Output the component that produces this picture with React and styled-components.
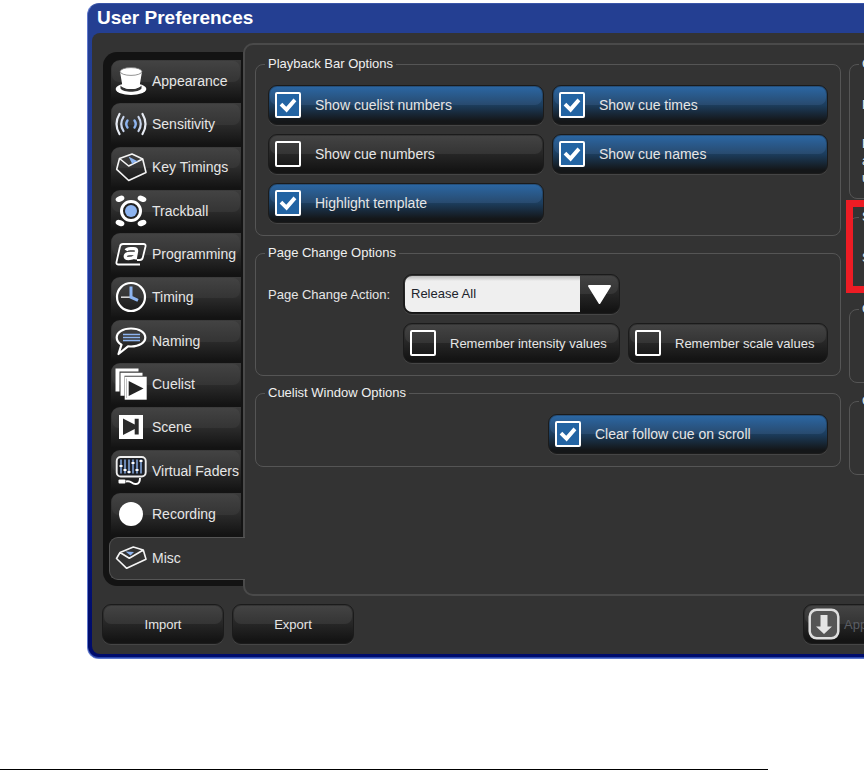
import React, { useState } from "react";
import styled, { createGlobalStyle, css } from "styled-components";

const GlobalStyle = createGlobalStyle`
  * { box-sizing: border-box; }
  body {
    margin: 0;
    background: #fff;
    font-family: "Liberation Sans", Arial, sans-serif;
    font-size: 14px;
    color: #e6e6e6;
  }
  button, input, select { font: inherit; color: inherit; margin: 0; }
`;

const Page = styled.main`
  padding-top: 3px;
  overflow: hidden;
`;

const Window = styled.section`
  margin: 0 -76px 0 87px;
  padding: 0 4px 4px;
  border: 1px solid #5f78cc;
  border-top-color: #3a55a8;
  border-radius: 12px;
  background: linear-gradient(#243f92 0, #243f92 30px, #1c3596 40%, #000c6c 95%);
  box-shadow: inset 0 -1px 0 #2c49ae;
`;

const TitleBar = styled.h1`
  margin: 0;
  padding: 0 5px;
  height: 29px;
  font-size: 19px;
  font-weight: bold;
  line-height: 27px;
  color: #fff;
`;

const Surface = styled.div`
  background: #333;
  border-radius: 8px;
  padding: 10px 0;
`;

const Body = styled.div`
  display: flex;
  min-height: 553px;
  padding: 0 11px;
`;

const Sidebar = styled.nav`
  display: flex;
  flex: 0 0 140px;
  flex-direction: column;
  margin: 9px 0 10px;
  padding: 8px 0 6px 8px;
  background: #131313;
  border-radius: 14px 0 0 14px;
`;

const gloss = css`
  position: relative;
  isolation: isolate;
  &::before {
    content: "";
    position: absolute;
    z-index: -1;
    inset: 1px 1px 50%;
    border-radius: 7px;
    background: ${(p) =>
      p.$on
        ? "linear-gradient(#2b66a2, #284a6e)"
        : "linear-gradient(#434343, #343434)"};
  }
`;

const Tab = styled.button`
  display: flex;
  flex: 1 1 0;
  align-items: center;
  gap: 5px;
  padding: 0 0 2px 4px;
  margin-right: 2px;
  border: 0;
  border-radius: 9px 0 0 0;
  background: linear-gradient(#3c3c3c, #2d2d2d 45%, #131313 95%);
  text-align: left;
  white-space: nowrap;
  ${gloss}

  ${(p) =>
    p.$active &&
    css`
      z-index: 1;
      margin: 0 -2px 0 -2px;
      padding: 0 0 0 5px;
      border: 1px solid #555;
      border-right: 0;
      border-radius: 9px 0 0 9px;
      background: #333;
      &::before { display: none; }
    `}
`;

const Icon = styled.svg`
  flex: 0 0 32px;
  width: 32px;
  height: 32px;
`;

const Panel = styled.div`
  display: flex;
  flex: 1;
  gap: 8px;
  min-width: 0;
  padding: 11px 10px;
  border: 2px solid #4a4a4a;
  border-radius: 10px;
`;

const Column = styled.div`
  display: flex;
  flex: 1;
  flex-direction: column;
  gap: 9px;
  min-width: 0;
`;

const SideColumn = styled(Column)`
  flex: 0 0 63px;
  gap: 10px;
`;

const Group = styled.fieldset`
  min-width: 0;
  margin: 0;
  padding: 13px 12px 12px;
  border: 1px solid #555;
  border-radius: 8px;
`;

const Legend = styled.legend`
  margin-left: -3px;
  padding: 0 3px;
  font-size: 13px;
  line-height: 16px;
  color: #f0f0f0;
`;

const Highlight = styled.div`
  position: relative;
  &::after {
    content: "";
    position: absolute;
    inset: -9px -3px -2px;
    border: 7px solid #ed1c24;
  }
`;

const TwoColumns = styled.div`
  display: grid;
  grid-template-columns: 1fr 1fr;
  gap: 9px 8px;
`;

const PageChangeGrid = styled.div`
  display: grid;
  grid-template-columns: 127px 217fr 200fr;
  gap: 9px 8px;
`;

const FieldLabel = styled.label`
  align-self: center;
  font-size: 13px;
  white-space: nowrap;
`;

const EndRow = styled.div`
  display: flex;
  justify-content: flex-end;
`;

const raised = css`
  height: 40px;
  border: 1px solid #1b1b1b;
  border-radius: 9px;
  box-shadow: 0 1px 0 #454545;
  background: ${(p) =>
    p.$on
      ? "linear-gradient(#25507c, #1c3d5d 50%, #141618 92%)"
      : "linear-gradient(#353535, #262626 50%, #141414 92%)"};
  ${gloss}
`;

const ToggleBox = styled.label`
  display: flex;
  align-items: center;
  gap: 14px;
  width: ${(p) => p.$width || "auto"};
  padding-left: 6px;
  font-size: ${(p) => (p.$compact ? "13px" : "14px")};
  white-space: nowrap;
  ${raised}
`;

const Check = styled.input`
  appearance: none;
  flex: 0 0 26px;
  height: 26px;
  border: 2px solid #fff;
  border-radius: 2px;
  &:checked { background: #2364a3; }
  &:checked::after {
    content: "";
    display: block;
    height: 22px;
    background: #fff;
    clip-path: polygon(12% 52%, 24% 40%, 42% 58%, 75% 21%, 88% 33%, 44% 84%);
  }
`;

const Combo = styled.div`
  display: flex;
  overflow: hidden;
  padding: 1px 0 1px 1px;
  ${raised}
`;

const ComboSelect = styled.select`
  appearance: none;
  flex: 1;
  min-width: 0;
  padding: 0 6px 1px;
  border: 0;
  border-radius: 7px 0 0 7px;
  background: linear-gradient(#bbb, #efefef 5px);
  color: #20242c;
  font-size: 13px;
`;

const ComboArrow = styled.svg`
  flex: 0 0 39px;
  height: 36px;
`;

const Note = styled.p`
  margin: 0;
  font-size: 13px;
  line-height: ${(p) => (p.$row ? "40px" : "17px")};
  margin-top: ${(p) => (p.$spaced ? "10px" : "0")};
`;

const Footer = styled.footer`
  display: flex;
  gap: 8px;
  margin-top: 8px;
  padding: 0 10px;
`;

const FooterButton = styled.button`
  display: flex;
  align-items: center;
  justify-content: center;
  gap: 4px;
  width: 122px;
  font-size: 13px;
  ${raised}
  &:disabled {
    justify-content: flex-start;
    margin-left: auto;
    padding: 0 4px;
    color: #5a5e64;
  }
`;

const Rule = styled.hr`
  width: calc(100% - 96px);
  height: 1px;
  margin: 110px 0 0;
  border: 0;
  background: #000;
`;

const blue = "#8db4f0";

const icons = {
  Appearance: (
    <>
      <ellipse cx="16" cy="24" rx="15.3" ry="6" fill="#fff" />
      <path d="M5.5 20.5c3 4.6 18 4.6 21 0v3c-3 4.4-18 4.4-21 0z" fill="#333" />
      <path d="M5 6.5 7.5 21.5c3 3.4 14 3.4 17 0L27 6.5z" fill="#fff" />
      <ellipse cx="16" cy="6.5" rx="10.9" ry="3.9" fill="#fff" stroke="#777" strokeWidth=".8" />
    </>
  ),
  Sensitivity: (
    <g fill="none" strokeLinecap="round">
      <path d="M4.5 6q-6 10 0 20M27.500 6q6 10 0 20" stroke="#e8ecf4" strokeWidth="2.2" />
      <path d="M8.5 9q-4.5 7 0 14M23.500 9q4.500 7 0 14" stroke="#c9d6ee" strokeWidth="2.2" />
      <path d="M12.5 12.5q-2.500 3.500 0 7M19.500 12.500q2.500 3.500 0 7" stroke={blue} strokeWidth="2.4" />
    </g>
  ),
  "Key Timings": (
    <>
      <path
        d="M4.5 7.5 17 3l10.7 5L31 21.5 13.7 29.5 1.7 18.3zM4.5 7.5 13.7 15l14-7"
        fill="none" stroke="#f4f4f4" strokeWidth="1.6" strokeLinejoin="round"
      />
      <path d="m13.5 5.500 9.500 5-4 .8-1.500 2.200z" fill={blue} />
    </>
  ),
  Trackball: (
    <>
      <circle cx="16" cy="16" r="9.5" fill="#222" stroke="#fff" strokeWidth="3" />
      <circle cx="16" cy="16" r="6" fill={blue} />
      <g fill="#fff">
        <ellipse cx="5" cy="3.8" rx="4.5" ry="2.8" transform="rotate(-20 5 3.8)" />
        <ellipse cx="27" cy="3.8" rx="4.5" ry="2.8" transform="rotate(20 27 3.8)" />
        <ellipse cx="5" cy="28" rx="4.5" ry="2.8" transform="rotate(20 5 28)" />
        <ellipse cx="27" cy="28" rx="4.5" ry="2.8" transform="rotate(-20 27 28)" />
      </g>
    </>
  ),
  Programming: (
    <>
      <path
        d="M25 26.5H3.5q-2.500 0-2-2.500L5 8.500Q5.500 6 8 6h20.500q2.500 0 2 2.500l-2.700 11q-.6 2.500-3 2.500H22"
        fill="none" stroke="#fff" strokeWidth="1.8"
      />
      <path
        d="M11 12.300q1-1.700 4.500-1.700h3q3.500 0 3 2.800l-1.400 8M20.500 15.500h-5.500q-4.300 0-4.700 2.500-.4 2.500 3.200 2.500 4.200 0 6.500-2"
        fill="none" stroke="#fff" strokeWidth="3.300"
      />
    </>
  ),
  Timing: (
    <>
      <circle cx="16" cy="16" r="14" fill="none" stroke="#fff" strokeWidth="2.2" />
      <path d="M6 16.2h9" stroke="#ddd" strokeWidth="1.5" />
      <path d="M16 5.5v10.700l7 3.200" fill="none" stroke={blue} strokeWidth="3" />
    </>
  ),
  Naming: (
    <>
      <path
        d="M16 3.5c8.500 0 14.300 4 14.300 9s-5.800 9-14.300 9l-3-.2L3.500 29l3-9.300C3.500 18 1.700 15.500 1.700 12.500c0-5 5.800-9 14.300-9z"
        fill="none" stroke="#fff" strokeWidth="2.2" strokeLinejoin="round"
      />
      <path d="M8 9.5h17M8 12.500h17M8 15.500h17" stroke={blue} strokeWidth="1.7" />
    </>
  ),
  Cuelist: (
    <>
      <path d="M.5.5h23v3h-19v20h-4zM5.500 4.700h22v3h-18v20h-4z" fill="#fff" />
      <path d="M9.700 8.700h22v23h-22z" fill="#fff" />
      <path d="M11.500 10.500v19.500" stroke="#aaa" strokeWidth=".7" />
      <path d="M13.700 13v15l14.800-7.600z" fill="#222" />
    </>
  ),
  Scene: (
    <>
      <path d="M4 4h24v24H4z" fill="#fff" />
      <path d="M8 7.500 19.700 13.500V7.800h4v15.700h-4v-5.500L8 24z" fill="#2b2b2b" />
    </>
  ),
  "Virtual Faders": (
    <>
      <rect x="1.7" y="2" width="29" height="19.5" rx="4" fill="#1d1f24" stroke="#eee" strokeWidth="1.9" />
      <path d="M6 4.500v14M10 4.500v14M14 4.500v14M18 4.500v14M22 4.500v14M26 4.500v14" stroke={blue} strokeWidth="1.4" />
      <path d="M4.500 11h3M8.500 15h3M12.500 17h3M16.500 8h3M20.500 15h3M24.500 6h3" stroke="#fff" strokeWidth="2" />
      <rect x="3.5" y="24.5" width="7" height="4" rx="1" fill="#fff" />
      <path d="M11 26.500c6-1.500 5 3 10 2.500 3 0 4-2 4-6" fill="none" stroke="#fff" strokeWidth="1.9" />
    </>
  ),
  Recording: <circle cx="16" cy="16" r="12" fill="#fff" />,
  Misc: (
    <>
      <path
        d="M5 10.500 18.300 5l10 3L31 17.300l-19.300 9L1.500 16.500zM5 10.500l9.300 5.700L28.300 8"
        fill="none" stroke="#f4f4f4" strokeWidth="1.6" strokeLinejoin="round"
      />
      <path d="M10.500 9.500 19 10l-3.500 3.500z" fill={blue} />
    </>
  ),
};

function Toggle({ label, defaultOn = false, width, compact }) {
  const [on, setOn] = useState(defaultOn);
  return (
    <ToggleBox $on={on} $width={width} $compact={compact}>
      <Check type="checkbox" checked={on} onChange={() => setOn(!on)} />
      {label}
    </ToggleBox>
  );
}

export default function App() {
  const [active, setActive] = useState("Misc");
  return (
    <Page>
      <GlobalStyle />
      <Window>
        <TitleBar>User Preferences</TitleBar>
        <Surface>
          <Body>
            <Sidebar>
              {Object.entries(icons).map(([name, art]) => (
                <Tab key={name} type="button" $active={name === active} onClick={() => setActive(name)}>
                  <Icon viewBox="0 0 32 32" aria-hidden="true">{art}</Icon>
                  {name}
                </Tab>
              ))}
            </Sidebar>
            <Panel>
              <Column>
                <Group>
                  <Legend>Playback Bar Options</Legend>
                  <TwoColumns>
                    <Toggle label="Show cuelist numbers" defaultOn />
                    <Toggle label="Show cue times" defaultOn />
                    <Toggle label="Show cue numbers" />
                    <Toggle label="Show cue names" defaultOn />
                    <Toggle label="Highlight template" defaultOn />
                  </TwoColumns>
                </Group>
                <Group>
                  <Legend>Page Change Options</Legend>
                  <PageChangeGrid>
                    <FieldLabel htmlFor="page-action">Page Change Action:</FieldLabel>
                    <Combo>
                      <ComboSelect id="page-action">
                        <option>Release All</option>
                      </ComboSelect>
                      <ComboArrow viewBox="0 0 39 36" aria-hidden="true">
                        <path d="M9 10h21L19.500 27z" fill="#fff" stroke="#fff" strokeLinejoin="round" strokeWidth="2" />
                      </ComboArrow>
                    </Combo>
                    <span />
                    <span />
                    <Toggle label="Remember intensity values" compact />
                    <Toggle label="Remember scale values" compact />
                  </PageChangeGrid>
                </Group>
                <Group>
                  <Legend>Cuelist Window Options</Legend>
                  <EndRow>
                    <Toggle label="Clear follow cue on scroll" defaultOn width="280px" />
                  </EndRow>
                </Group>
              </Column>
              <SideColumn>
                <Group>
                  <Legend>C</Legend>
                  <Note $row>P</Note>
                  <Note $spaced>P<br />a<br />u</Note>
                </Group>
                <Highlight>
                  <Group>
                    <Legend>S</Legend>
                    <Note $row>S</Note>
                  </Group>
                </Highlight>
                <Group>
                  <Legend>C</Legend>
                  <Note $row>&nbsp;</Note>
                </Group>
                <Group>
                  <Legend>C</Legend>
                  <Note $row>&nbsp;</Note>
                </Group>
              </SideColumn>
            </Panel>
          </Body>
          <Footer>
            <FooterButton type="button">Import</FooterButton>
            <FooterButton type="button">Export</FooterButton>
            <FooterButton type="button" disabled>
              <Icon viewBox="0 0 32 32" aria-hidden="true">
                <rect x="1.7" y="1.7" width="28.6" height="28.6" rx="7" fill="#555" stroke="#dedede" strokeWidth="2.5" />
                <path d="M12.500 7h7v11.500h4.500L16 26l-8-7.500h4.500z" fill="#e4e4e4" />
              </Icon>
              Apply
            </FooterButton>
          </Footer>
        </Surface>
      </Window>
      <Rule />
    </Page>
  );
}
